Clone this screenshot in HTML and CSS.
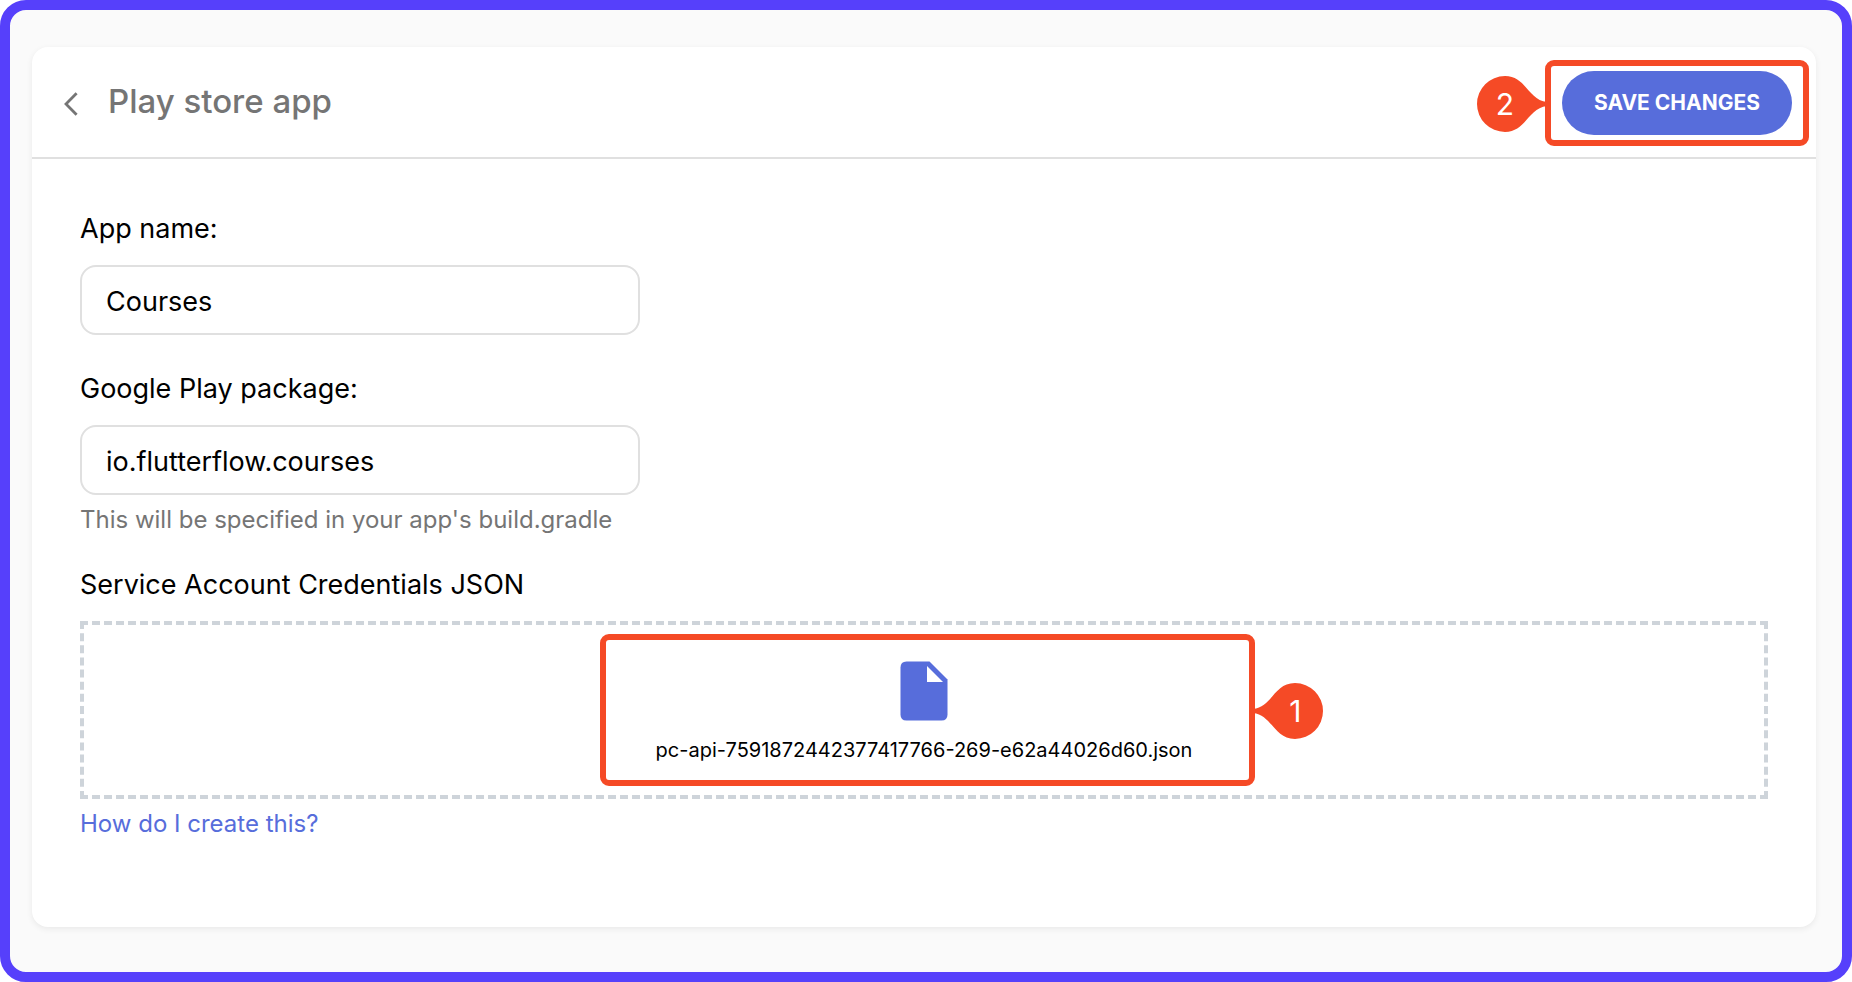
FILE: index.html
```html
<!DOCTYPE html>
<html lang="en">
<head>
<meta charset="utf-8">
<meta name="viewport" content="width=device-width, initial-scale=1">
<title>Play store app</title>
<link rel="stylesheet" href="styles.css">
</head>
<body>
<div class="frame">
  <main class="card">
    <header class="card-header">
      <button class="back" type="button" aria-label="Back">
        <svg width="14" height="24" viewBox="0 0 14 24" fill="none" stroke="#757575" stroke-width="2.8"><path d="M12.6 1.2 2 12l10.600 10.800"/></svg>
      </button>
      <h1 class="title">Play store app</h1>
      <div class="save">
        <button class="save-button" type="button">SAVE CHANGES</button>
        <div class="highlight highlight-save">
          <div class="callout callout-left">
            <svg class="callout-shape" width="70" height="56" viewBox="0 0 70 56" fill="#f54a26"><path d="M28 0A28 28 0 1 0 28 56C49 56 51 32 70 30V26C51 24 49 0 28 0Z"/></svg>
            <span class="callout-number">2</span>
          </div>
        </div>
      </div>
    </header>
    <form class="form">
      <div class="field">
        <label class="label" for="app-name">App name:</label>
        <input class="input" id="app-name" type="text" value="Courses">
      </div>
      <div class="field">
        <label class="label" for="package">Google Play package:</label>
        <input class="input" id="package" type="text" value="io.flutterflow.courses" spellcheck="false">
        <p class="hint">This will be specified in your app's build.gradle</p>
      </div>
      <div class="field">
        <span class="label">Service Account Credentials JSON</span>
        <div class="dropzone">
          <div class="file">
            <svg width="48" height="60" viewBox="0 0 48 60"><path fill="#576ddb" d="M6.500 .5H29.500L47.500 18.500V53.500Q47.500 59.500 41.500 59.500H6.500Q.5 59.500 .5 53.500V6.500Q.5 .5 6.500 .5Z"/><path fill="#fff" d="M27 5V21H43Z"/></svg>
            <span class="file-name">pc-api-7591872442377417766-269-e62a44026d60.json</span>
            <div class="highlight highlight-file">
              <div class="callout callout-right">
                <svg class="callout-shape flipped" width="70" height="56" viewBox="0 0 70 56" fill="#f54a26"><path d="M28 0A28 28 0 1 0 28 56C49 56 51 32 70 30V26C51 24 49 0 28 0Z"/></svg>
                <span class="callout-number">1</span>
              </div>
            </div>
          </div>
        </div>
        <a class="link" href="#">How do I create this?</a>
      </div>
    </form>
  </main>
</div>
</body>
</html>
```

FILE: styles.css
```css
* { box-sizing: border-box; }

body {
  margin: 0;
  background: #fff;
  color: #000;
  font-family: Inter, "Liberation Sans", sans-serif;
}

.frame {
  display: flex;
  min-height: 100vh;
  padding: 37px 26px 45px 22px;
  border: 10px solid #5640fb;
  border-radius: 26px;
  background: #fafafa;
}

.card {
  flex: 1;
  min-width: 0;
  border-radius: 16px;
  background: #fff;
  box-shadow: 0 2px 6px rgba(0, 0, 0, 0.07);
}

.card-header {
  display: flex;
  align-items: center;
  height: 112px;
  padding: 2px 24px 0 32px;
  border-bottom: 2px solid #e0e0e0;
}

.back {
  display: flex;
  padding: 2px 0 0;
  border: 0;
  background: none;
}

.title {
  flex: 1;
  margin: 0 0 4px 30px;
  color: #757575;
  font-size: 33px;
  font-weight: 500;
  line-height: 40px;
}

.save { position: relative; }

.save-button {
  display: block;
  height: 64px;
  padding: 0 32px 2px;
  border: 0;
  border-radius: 32px;
  background: #576ddb;
  color: #fff;
  font-family: inherit;
  font-size: 21px;
  font-weight: 700;
}

.highlight {
  position: absolute;
  border: 6px solid #f54a26;
  border-radius: 9px;
  pointer-events: none;
}

.highlight-save { inset: -11px -17px; }

.highlight-file { inset: -27px -63px -21px -56px; }

.callout {
  position: absolute;
  top: 50%;
  width: 70px;
  height: 56px;
  margin-top: -27px;
  color: #fff;
}

.callout-left { right: calc(100% + 4px); }

.callout-right { left: calc(100% + 4px); }

.callout-shape { display: block; }

.flipped { transform: scaleX(-1); }

.callout-number {
  position: absolute;
  top: 0;
  width: 56px;
  font-size: 30px;
  line-height: 56px;
  text-align: center;
}

.callout-left .callout-number { left: 0; }

.callout-right .callout-number { right: 0; }

.form {
  display: flex;
  flex-direction: column;
  gap: 37px;
  padding: 53px 48px;
}

.field {
  display: flex;
  flex-direction: column;
  align-items: flex-start;
}

.label {
  margin-bottom: 19px;
  font-size: 27px;
  line-height: 34px;
}

.input {
  width: 560px;
  max-width: 100%;
  height: 70px;
  padding: 2px 24px 0;
  border: 2px solid #e0e0e0;
  border-radius: 16px;
  background: #fff;
  color: #000;
  font-family: inherit;
  font-size: 27px;
}

.hint {
  margin: 13px 0 0;
  color: #757575;
  font-size: 24px;
  line-height: 23px;
}

.dropzone {
  display: flex;
  justify-content: center;
  width: 100%;
  padding: 36px 24px 30px;
  border: 4px dashed #ced4da;
}

.file {
  position: relative;
  display: flex;
  flex-direction: column;
  align-items: center;
  gap: 14px;
}

.file-name {
  font-size: 20px;
  line-height: 30px;
}

.link {
  margin-top: 10px;
  color: #576ddb;
  font-size: 24px;
  line-height: 30px;
  text-decoration: none;
}
```
